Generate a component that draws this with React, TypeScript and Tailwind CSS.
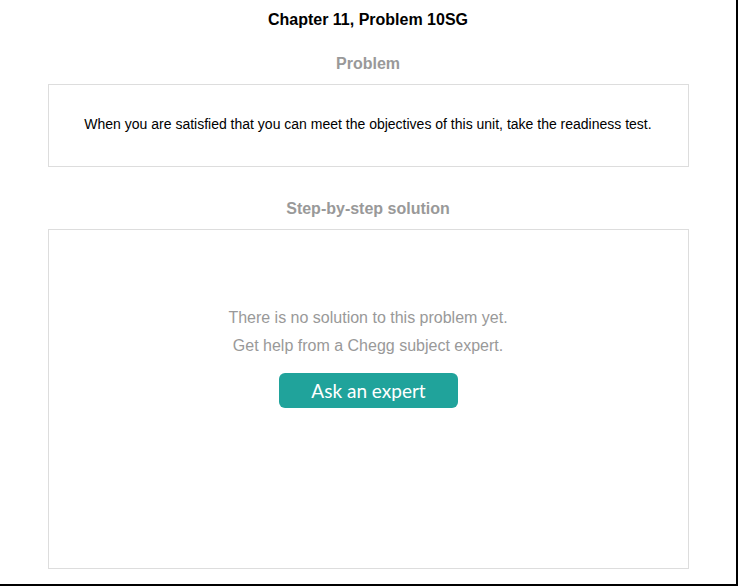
const App = () => {
  return (
    <div className="w-[738px] h-[586px] bg-white border-r-2 border-b-2 border-black font-['Liberation_Sans',Arial,sans-serif]">
      <div className="pt-[10px] text-center">
        <h1 className="text-[16px] leading-[20px] font-bold text-black">Chapter 11, Problem 10SG</h1>

        <h2 className="mt-[24px] text-[16px] leading-[20px] font-bold text-[#999999]">Problem</h2>
        <div className="mx-auto mt-[10px] w-[641px] border border-[#dddddd] pt-[31px] pb-[33px]">
          <p className="text-[14px] leading-[17px] text-black">
            When you are satisfied that you can meet the objectives of this unit, take the readiness test.
          </p>
        </div>

        <h2 className="mt-[32px] text-[16px] leading-[20px] font-bold text-[#999999]">Step-by-step solution</h2>
        <div className="mx-auto mt-[10px] h-[340px] w-[641px] border border-[#dddddd] pt-[74px]">
          <p className="text-[16px] leading-[28px] text-[#999999]">There is no solution to this problem yet.</p>
          <p className="text-[16px] leading-[28px] text-[#999999]">Get help from a Chegg subject expert.</p>
          <button className="mt-[13px] ml-[1px] h-[35px] w-[179px] rounded-md bg-[#20a39b] text-[19px] leading-[35px] text-white font-['Lato','Open_Sans',sans-serif]">
            Ask an expert
          </button>
        </div>
      </div>
    </div>
  );
};

export default App;
